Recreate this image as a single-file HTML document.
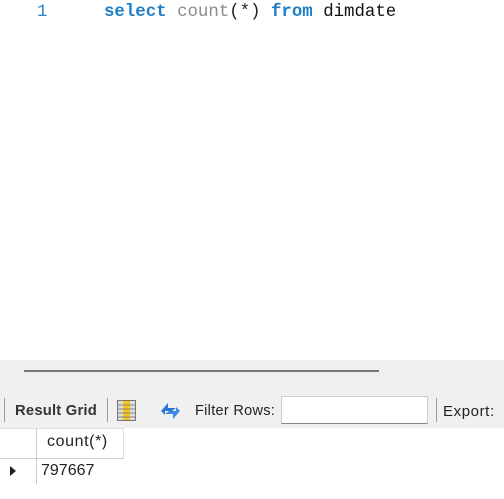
<!DOCTYPE html>
<html><head><style>
body{margin:0;width:504px;height:499px;background:#fff;position:relative;overflow:hidden;font-family:"Liberation Sans",sans-serif}
.a{position:absolute}
.code{font-family:"Liberation Mono",monospace;font-size:17.4px;top:3px;white-space:pre}
.t{font-size:14.5px;color:#222}
</style></head><body>
<div class="a code" style="left:37px;color:#2a86c0">1</div>
<div class="a code" style="left:104px"><span style="color:#1f7fc4;font-weight:bold">select</span> <span style="color:#8c8c8c">count</span><span style="color:#222">(*)</span> <span style="color:#1f7fc4;font-weight:bold">from</span> <span style="color:#111">dimdate</span></div>
<div class="a" style="left:0;top:360px;width:504px;height:68px;background:#f0f0f0"></div>
<div class="a" style="left:24px;top:370px;width:355px;height:2px;background:#777"></div>
<div class="a" style="left:4px;top:398px;width:1px;height:24px;background:#999"></div>
<div class="a t" style="left:15px;top:403px;font-weight:bold;color:#333;font-size:14.8px;letter-spacing:0.2px">Result Grid</div>
<div class="a" style="left:107px;top:398px;width:1px;height:24px;background:#999"></div>
<svg class="a" style="left:117px;top:400px" width="19" height="21"><rect x="0.5" y="0.5" width="18" height="20" fill="#ddd" stroke="#777"/><rect x="6" y="1" width="7" height="19" fill="#f5c518"/><path d="M1 5H18M1 9H18M1 13H18M1 17H18" stroke="#888"/></svg>
<svg class="a" style="left:158px;top:400px" width="25" height="22"><path d="M3 11 L10 3 V8 H18 L14 11 H7 V15Z" fill="#2a76d2"/><path d="M22 11 L15 19 V14 H7 L11 11 H18 V7Z" fill="#3d8ae0"/></svg>
<div class="a t" style="left:195px;top:403px;font-size:14.5px;letter-spacing:0.3px">Filter Rows:</div>
<div class="a" style="left:281px;top:396px;width:147px;height:28px;background:#fff;border:1px solid #ccc;border-bottom-color:#888;box-sizing:border-box"></div>
<div class="a" style="left:436px;top:398px;width:1px;height:24px;background:#999"></div>
<div class="a t" style="left:443px;top:403px;font-size:15px;letter-spacing:0.6px">Export:</div>
<div class="a" style="left:0;top:428px;width:124px;height:1px;background:#ddd"></div>
<div class="a" style="left:36px;top:428px;width:1px;height:56px;background:#ccc"></div>
<div class="a" style="left:123px;top:428px;width:1px;height:30px;background:#ddd"></div>
<div class="a" style="left:0;top:458px;width:124px;height:1px;background:#ccc"></div>
<div class="a t" style="left:47px;top:433px;font-size:16px;letter-spacing:0.6px">count(*)</div>
<svg class="a" style="left:9px;top:465px" width="8" height="12"><path d="M1 1L7 6L1 11Z" fill="#222"/></svg>
<div class="a t" style="left:41px;top:462px;font-size:16px">797667</div>
</body></html>
